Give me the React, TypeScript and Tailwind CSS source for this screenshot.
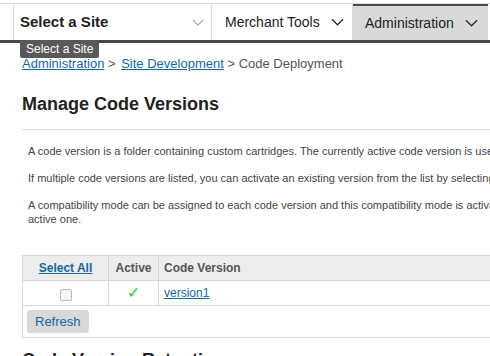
import React from "react";

function Chevron({ className }: { className: string }) {
  return (
    <svg viewBox="0 0 14 8" className={className} fill="none" stroke="currentColor">
      <path d="M1 1l6 6 6-6" />
    </svg>
  );
}

export default function App() {
  return (
    <div className="relative h-[356px] w-[490px] overflow-hidden bg-white font-['Liberation_Sans',Arial,sans-serif] text-[#222]">
      <div className="w-[1000px]">
        {/* top navigation */}
        <div className="mt-[3px] flex h-[37px] border-t border-[#dcdcdc]">
          <div className="w-[13px]" />
          <div className="flex w-[199px] items-center justify-between border-x border-[#dcdcdc] pl-[6px] pr-[7px]">
            <span className="text-[15px] font-bold">Select a Site</span>
            <Chevron className="h-[7px] w-[12px] stroke-[1.2] text-[#999]" />
          </div>
          <div className="flex w-[141px] items-center justify-between border-r border-[#dcdcdc] pl-[13px] pr-[8px]">
            <span className="text-[14px]">Merchant Tools</span>
            <Chevron className="h-[8px] w-[13px] stroke-[1.6] text-[#333]" />
          </div>
          <div className="flex w-[135px] items-center justify-between border-t-2 border-[#4a4a4a] bg-[#d9d9d9] pl-[12px] pr-[10px]">
            <span className="text-[14px]">Administration</span>
            <Chevron className="h-[8px] w-[13px] stroke-[1.6] text-[#333]" />
          </div>
        </div>
        <div className="h-[3px] bg-[#474747]" />

        <div className="px-[22px]">
          {/* breadcrumb */}
          <div className="mt-[13px] text-[13px] leading-[15px] text-[#555]">
            <a className="text-[#16679f] underline">Administration</a>
            <span> &gt; </span>
            <a className="ml-[2px] text-[#16679f] underline">Site Development</a>
            <span> &gt; Code Deployment</span>
          </div>

          <h1 className="mt-[22px] text-[18px] font-bold leading-[22px] text-[#222]">Manage Code Versions</h1>
          <div className="mt-[14px] h-px bg-[#dddddd]" />

          <div className="mt-[14px] space-y-[13px] pl-[6px] text-[11px] leading-[14px] text-[#444]">
            <p>A code version is a folder containing custom cartridges. The currently active code version is used by the storefront and the Business Manager.</p>
            <p>If multiple code versions are listed, you can activate an existing version from the list by selecting it and clicking the Activate button.</p>
            <p className="w-[688px]">
              A compatibility mode can be assigned to each code version and this compatibility mode is activated with the code version in place of the active one.
            </p>
          </div>

          {/* table */}
          <table className="mt-[29px] w-[900px] border-collapse border border-[#d6d6d6] text-[12px]">
            <thead>
              <tr className="h-[25px] bg-[#ededed]">
                <th className="w-[86px] border border-[#d6d6d6] text-center font-bold">
                  <a className="text-[#16679f] underline">Select All</a>
                </th>
                <th className="w-[50px] border border-[#d6d6d6] text-center font-bold text-[#555]">Active</th>
                <th className="border border-[#d6d6d6] pl-[5px] text-left font-bold text-[#555]">Code Version</th>
              </tr>
            </thead>
            <tbody>
              <tr className="h-[25px]">
                <td className="border border-[#d6d6d6] text-center">
                  <span className="inline-block h-[12px] w-[12px] translate-y-[1px] rounded-[2px] border border-[#bbb] bg-[#f6f6f6] align-middle" />
                </td>
                <td className="border border-[#d6d6d6] text-center text-[16px] leading-none text-[#2fd12f]">✓</td>
                <td className="border border-[#d6d6d6] pl-[5px]">
                  <a className="text-[#16679f] underline">version1</a>
                </td>
              </tr>
              <tr>
                <td colSpan={3} className="border border-[#d6d6d6] px-[4px] py-[4px]">
                  <button className="h-[23px] rounded-[3px] bg-[#d9d9d9] px-[8px] text-[13px] text-[#16679f]">Refresh</button>
                </td>
              </tr>
            </tbody>
          </table>

          <h2 className="mt-[11px] text-[18px] font-bold leading-[22px] text-[#222]">Code Version Retention</h2>
        </div>
      </div>

      {/* tooltip */}
      <div className="absolute left-[20px] top-[40px] rounded-[2px] bg-[#595959] px-[6px] py-[3px] text-[12px] leading-[12px] text-white">
        Select a Site
      </div>
    </div>
  );
}
